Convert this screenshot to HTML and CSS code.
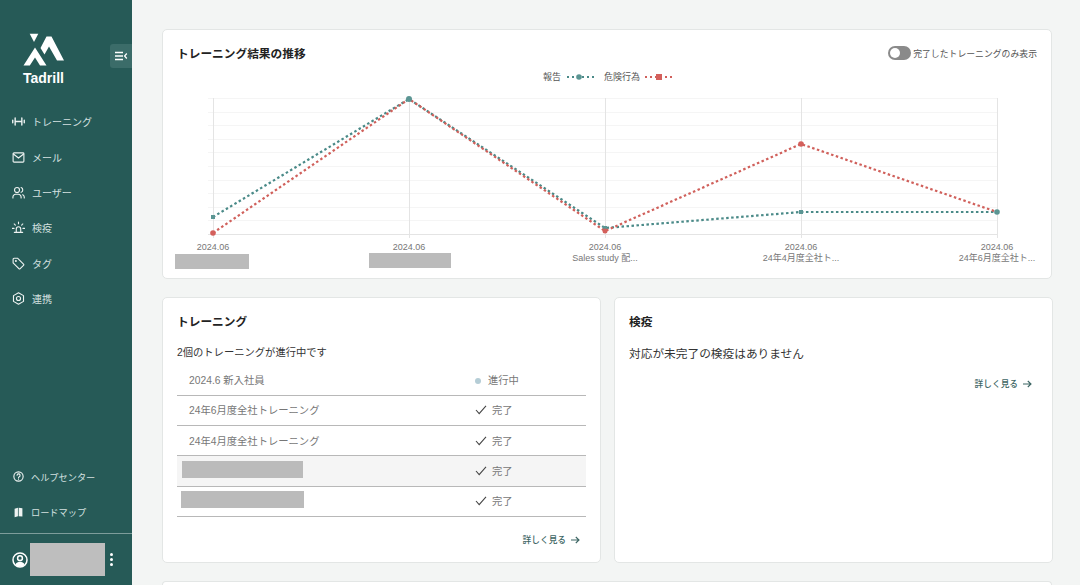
FILE: index.html
```html
<!DOCTYPE html>
<html lang="ja">
<head>
  <meta charset="UTF-8" />
  <title>Tadrill</title>
  <link rel="stylesheet" href="styles.css">
</head>
<body>
  <div class="app">
    <!-- Sidebar -->
    <aside class="sidebar">
      <div class="logo">
        <svg class="logo-mark" viewBox="0 0 42 34" width="42" height="34">
          <polygon points="6.7,0.7 15.3,0.7 11,9" />
          <polygon points="23.5,3.5 28.5,3.5 41,27.5 34,27.5 26,13.5 21.5,21.5 17.5,15" />
          <polygon points="0.5,32.5 12,14.5 23.5,32.5 17,32.5 12,24.5 6.8,32.5" />
        </svg>
        <div class="logo-name">Tadrill</div>
      </div>
      <button class="collapse-button">
        <svg viewBox="0 0 14 10" width="14" height="10"><path d="M1 1.5h8M1 5h8M1 8.5h8M12.8 2.5L10.6 5l2.2 2.5" /></svg>
      </button>

      <nav class="nav">
        <a class="nav-item">
          <svg class="icon" viewBox="0 0 14 14"><path class="thick" d="M.8 5.6v2.8M3.4 3.2v7.6M3.4 7h7.2M10.6 3.2v7.6M13.2 5.6v2.8" /></svg>
          トレーニング
        </a>
        <a class="nav-item">
          <svg class="icon" viewBox="0 0 14 14"><rect x="1.2" y="2" width="11.6" height="10" rx="1" /><path d="M1.5 3.2L7 7.6l5.5-4.4" /></svg>
          メール
        </a>
        <a class="nav-item">
          <svg class="icon" viewBox="0 0 14 14"><circle cx="5.4" cy="4.3" r="2.7" /><path d="M1 12.8v-.9a3 3 0 0 1 3-3h2.8a3 3 0 0 1 3 3v.9M9.8 1.7a2.7 2.7 0 0 1 0 5.1M13.2 12.8v-.9a3 3 0 0 0-1.6-2.6" /></svg>
          ユーザー
        </a>
        <a class="nav-item">
          <svg class="icon" viewBox="0 0 14 14"><path d="M2.5 12.2h9M4.6 12.2V8.6a2.4 2.4 0 0 1 4.8 0v3.6M7 1.2v1.8M2.4 3.2l1.2 1.2M11.6 3.2l-1.2 1.2M.4 8h1.8M11.8 8h1.8" /></svg>
          検疫
        </a>
        <a class="nav-item">
          <svg class="icon" viewBox="0 0 14 14"><path d="M1.2 2.4a1 1 0 0 1 1-1h4l6.2 6.2a1 1 0 0 1 0 1.4l-3.6 3.6a1 1 0 0 1-1.4 0L1.2 6.4z" /><circle cx="4.2" cy="4.4" r=".5" /></svg>
          タグ
        </a>
        <a class="nav-item">
          <svg class="icon" viewBox="0 0 14 14"><polygon points="7,.9 12.4,3.9 12.4,10.1 7,13.1 1.6,10.1 1.6,3.9" /><circle cx="7" cy="7" r="2.2" /></svg>
          連携
        </a>
      </nav>

      <div class="nav-bottom">
        <a class="nav-item small">
          <svg class="icon" viewBox="0 0 14 14"><circle cx="7" cy="7" r="5" /><path d="M5.5 5.7a1.6 1.6 0 1 1 2.3 1.5c-.5.3-.8.6-.8 1.1M7 9.8v.1" /></svg>
          ヘルプセンター
        </a>
        <a class="nav-item small">
          <svg class="icon" viewBox="0 0 14 14"><path class="filled" d="M2.8 3l3.6-1v9l-3.6 1zM7.2 2l4 .3v9l-4-.3z" /></svg>
          ロードマップ
        </a>
      </div>

      <div class="user-row">
        <svg class="user-icon" viewBox="0 0 16 16" width="16" height="16">
          <circle cx="8" cy="8" r="7" />
          <circle cx="8" cy="6.2" r="2.4" />
          <path class="filled" d="M3.4 12.6c.8-2 2.6-2.8 4.6-2.8s3.8.8 4.6 2.8C11.4 14 9.7 14.8 8 14.8s-3.4-.8-4.6-2.2z" />
        </svg>
        <div class="user-name"></div>
        <div class="user-menu"><span></span><span></span><span></span></div>
      </div>
    </aside>

    <!-- Main -->
    <main class="main">
      <section class="card chart-card">
        <div class="chart-header">
          <h2>トレーニング結果の推移</h2>
          <div class="switch-wrap">
            <span class="switch"></span>
            <span>完了したトレーニングのみ表示</span>
          </div>
        </div>
        <svg class="chart" viewBox="163 66 888 204" width="888" height="204">
          <g class="grid-h">
            <path d="M208 98.5H997M208 112.5H997M208 125.5H997M208 139.5H997M208 152.5H997M208 166.5H997M208 180.5H997M208 193.5H997M208 207.5H997M208 220.5H997" />
          </g>
          <path class="axis" d="M208 234.5H997" />
          <path class="axis" d="M213.5 98V238M409.5 98V238M605.5 98V238M801.5 98V238M997.5 98V238" />

          <text class="legend" x="543" y="80">報告</text>
          <path class="legend-line green" d="M567 77H594" />
          <circle class="dot-green" cx="579" cy="77" r="2.8" />
          <text class="legend" x="604" y="80">危険行為</text>
          <path class="legend-line red" d="M645 77H672" />
          <rect class="dot-red" x="656" y="74" width="6" height="6" />

          <polyline class="line green" points="213,217 409,99 605,228 801,212 997,212" />
          <polyline class="line red" points="213,233 409,99 605,231 801,144 997,212" />
          <rect class="dot-green" x="211" y="215" width="4" height="4" />
          <circle class="dot-green" cx="409" cy="99" r="3" />
          <rect class="dot-green" x="603" y="226" width="4" height="4" />
          <rect class="dot-green" x="799" y="210" width="4" height="4" />
          <circle class="dot-green" cx="997" cy="212" r="2.8" />
          <circle class="dot-red" cx="213" cy="233" r="2.8" />
          <circle class="dot-red" cx="605" cy="231" r="2.5" />
          <circle class="dot-red" cx="801" cy="144" r="2.8" />

          <text class="tick" x="213" y="250">2024.06</text>
          <text class="tick" x="409" y="250">2024.06</text>
          <text class="tick" x="605" y="250">2024.06</text>
          <text class="tick" x="801" y="250">2024.06</text>
          <text class="tick" x="997" y="250">2024.06</text>
          <rect class="redact-box" x="175" y="254" width="74" height="15" />
          <rect class="redact-box" x="369" y="253" width="82" height="15" />
          <text class="tick" x="605" y="261">Sales study 配...</text>
          <text class="tick" x="801" y="261">24年4月度全社ト...</text>
          <text class="tick" x="997" y="261">24年6月度全社ト...</text>
        </svg>
      </section>

      <div class="card-row">
        <section class="card panel">
          <h2>トレーニング</h2>
          <p class="summary">2個のトレーニングが進行中です</p>
          <table class="training-table">
            <tr>
              <td>2024.6 新入社員</td>
              <td class="status"><span class="status-dot"></span>進行中</td>
            </tr>
            <tr>
              <td>24年6月度全社トレーニング</td>
              <td class="status"><svg class="check" viewBox="0 0 13 11"><path d="M1 5.5l3.5 4L12 1" /></svg>完了</td>
            </tr>
            <tr>
              <td>24年4月度全社トレーニング</td>
              <td class="status"><svg class="check" viewBox="0 0 13 11"><path d="M1 5.5l3.5 4L12 1" /></svg>完了</td>
            </tr>
            <tr class="hovered">
              <td><div class="redact"></div></td>
              <td class="status"><svg class="check" viewBox="0 0 13 11"><path d="M1 5.5l3.5 4L12 1" /></svg>完了</td>
            </tr>
            <tr>
              <td><div class="redact wide"></div></td>
              <td class="status"><svg class="check" viewBox="0 0 13 11"><path d="M1 5.5l3.5 4L12 1" /></svg>完了</td>
            </tr>
          </table>
          <a class="more-link training-more">詳しく見る
            <svg viewBox="0 0 10 10" width="10" height="10"><path d="M1 5h8M5.8 2L9 5 5.8 8" /></svg>
          </a>
        </section>

        <section class="card panel">
          <h2>検疫</h2>
          <p class="summary large">対応が未完了の検疫はありません</p>
          <a class="more-link quarantine-more">詳しく見る
            <svg viewBox="0 0 10 10" width="10" height="10"><path d="M1 5h8M5.8 2L9 5 5.8 8" /></svg>
          </a>
        </section>
      </div>

      <section class="card next-card"></section>
    </main>
  </div>
</body>
</html>
```

FILE: styles.css
```css
* { margin: 0; padding: 0; box-sizing: border-box; }

html, body {
  height: 100%;
  overflow: hidden;
  font-family: "Liberation Sans", "Noto Sans CJK JP", sans-serif;
  background: #f3f5f4;
  color: #333;
}

.app {
  display: flex;
  height: 585px;
}

/* Sidebar */
.sidebar {
  position: relative;
  display: flex;
  flex-direction: column;
  flex: 0 0 132px;
  background: #265a57;
  color: #d5e1e0;
}

.logo {
  width: 42px;
  margin: 33px 0 0 23px;
}

.logo-mark {
  display: block;
  fill: #fff;
}

.logo-name {
  margin-top: 3px;
  font-size: 14px;
  line-height: 17px;
  font-weight: bold;
  color: #fff;
  white-space: nowrap;
}

.collapse-button {
  position: absolute;
  top: 44px;
  left: 110px;
  width: 22px;
  height: 24px;
  display: flex;
  align-items: center;
  justify-content: center;
  background: #3b6c69;
  border: none;
  border-radius: 3px 0 0 3px;
}

.collapse-button svg {
  fill: none;
  stroke: #fff;
  stroke-width: 1.3;
}

.nav {
  margin-top: 17px;
}

.nav-item {
  display: flex;
  align-items: center;
  gap: 7px;
  height: 35.4px;
  padding-left: 12px;
  font-size: 10px;
}

.nav-item.small {
  gap: 6px;
  font-size: 9.2px;
}

.icon {
  flex: 0 0 13px;
  width: 13px;
  height: 13px;
  fill: none;
  stroke: #eef3f2;
  stroke-width: 1.2;
  stroke-linecap: round;
  stroke-linejoin: round;
}

.icon .thick {
  stroke-width: 1.5;
}

.icon .filled {
  fill: #eef3f2;
  stroke: none;
}

.nav-bottom {
  margin-top: auto;
  padding-bottom: 3px;
}

.user-row {
  display: flex;
  align-items: center;
  height: 52px;
  padding-left: 12px;
  border-top: 1px solid #7d9d9b;
}

.user-icon {
  flex: 0 0 16px;
  fill: none;
  stroke: #fff;
  stroke-width: 1.5;
}

.user-icon .filled {
  fill: #fff;
  stroke: none;
}

.user-name {
  width: 75px;
  height: 33px;
  margin-left: 2px;
  background: #bebebe;
}

.user-menu {
  display: flex;
  flex-direction: column;
  gap: 2px;
  margin-left: 5px;
}

.user-menu span {
  width: 3px;
  height: 3px;
  border-radius: 50%;
  background: #fff;
}

/* Main */
.main {
  flex: 1;
  overflow: hidden;
  padding: 29px 28px 0 30px;
}

.card {
  background: #fff;
  border: 1px solid #e3e6e5;
  border-radius: 5px;
}

.chart-card {
  height: 250px;
}

.chart-header {
  display: flex;
  justify-content: space-between;
  align-items: center;
  height: 36px;
  padding: 12px 14px 0 14px;
}

h2 {
  font-size: 11.7px;
  line-height: 18px;
  font-weight: bold;
  color: #222;
}

.switch-wrap {
  display: flex;
  align-items: center;
  gap: 2px;
  margin-bottom: 2px;
  font-size: 8.85px;
  color: #555;
}

.switch {
  position: relative;
  width: 23px;
  height: 14px;
  border-radius: 7px;
  background: #8a8a8a;
}

.switch::before {
  content: "";
  position: absolute;
  top: 2px;
  left: 2px;
  width: 10px;
  height: 10px;
  border-radius: 50%;
  background: #fff;
}

.chart {
  display: block;
}

.grid-h path {
  stroke: #f5f5f5;
  fill: none;
}

.axis {
  stroke: #e4e4e4;
  fill: none;
}

.line {
  fill: none;
  stroke-width: 2.2;
  stroke-dasharray: 2.5 2.5;
}

.legend-line {
  fill: none;
  stroke-width: 2;
  stroke-dasharray: 2 3;
}

.green { stroke: #4a8a88; }
.red { stroke: #d0605b; }
.dot-green { fill: #5b9593; }
.dot-red { fill: #d4605c; }

.legend {
  font-size: 9px;
  fill: #555;
}

.tick {
  font-size: 9px;
  fill: #777;
  text-anchor: middle;
}

.redact-box {
  fill: #bbb;
}

.card-row {
  display: grid;
  grid-template-columns: 439px 439px;
  gap: 13px;
  margin-top: 18px;
}

.panel {
  height: 266px;
  padding: 15px 15px 0 14px;
}

.summary {
  margin-top: 14px;
  font-size: 10.3px;
  line-height: 16px;
  color: #333;
}

.summary.large {
  margin-top: 15px;
  font-size: 11.7px;
}

.training-table {
  width: 409px;
  margin-top: 4px;
  border-collapse: collapse;
  font-size: 10.3px;
  color: #777;
}

.training-table td {
  height: 30.3px;
  padding-left: 12px;
  padding-bottom: 1px;
  border-bottom: 1px solid #b8b8b8;
}

.training-table td:first-child {
  width: 298px;
}

.training-table .status {
  padding-left: 0;
}

.hovered td {
  background: #f5f5f5;
}

.status-dot {
  display: inline-block;
  width: 6px;
  height: 6px;
  margin-right: 7px;
  border-radius: 50%;
  background: #b5cdd6;
}

.check {
  width: 12px;
  height: 10px;
  margin-right: 5px;
  vertical-align: -1px;
  fill: none;
  stroke: #444;
  stroke-width: 1.2;
}

.redact {
  width: 121px;
  height: 17px;
  margin: 0 0 3px -7px;
  background: #bbb;
}

.redact.wide {
  width: 123px;
  margin-left: -8px;
}

.more-link {
  display: flex;
  justify-content: flex-end;
  align-items: center;
  gap: 4px;
  padding-right: 5px;
  font-size: 8.7px;
  line-height: 14px;
  font-weight: 500;
  color: #3d6664;
}

.more-link svg {
  fill: none;
  stroke: #3d6664;
  stroke-width: 1.1;
}

.training-more { margin-top: 16px; }
.quarantine-more { margin-top: 15px; }

.next-card {
  height: 4px;
  margin-top: 18px;
  border-bottom: 0;
  border-radius: 5px 5px 0 0;
}
```
